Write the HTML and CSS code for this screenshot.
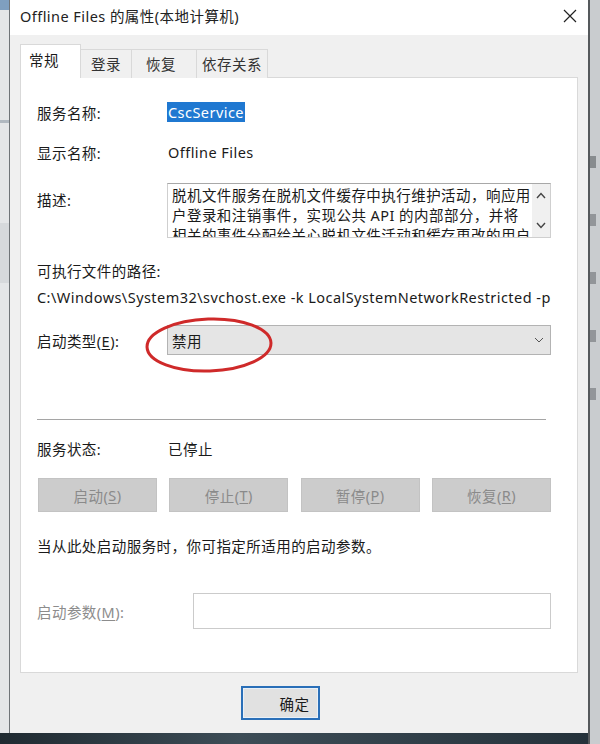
FILE: index.html
```html
<!DOCTYPE html>
<html lang="zh-CN">
<head>
<meta charset="utf-8">
<title>Offline Files 的属性(本地计算机)</title>
<link rel="stylesheet" href="styles.css">
</head>
<body>
<div class="screen">
  <div class="side side-left">
    <span class="frag f1"></span>
    <span class="frag f2"></span>
    <span class="frag f3"></span>
  </div>
  <div class="dialog">
    <div class="titlebar">
      <span class="title">Offline Files 的属性(本地计算机)</span>
      <svg class="close" width="14" height="14" viewBox="0 0 14 14"><path d="M1 1 L13 13 M13 1 L1 13" stroke="#222" stroke-width="1.2" fill="none"/></svg>
    </div>
    <div class="dbody">
      <div class="tabs">
        <div class="tab active">常规</div>
        <div class="tab tab-login">登录</div>
        <div class="tab tab-restore">恢复</div>
        <div class="tab tab-dep">依存关系</div>
      </div>
      <div class="panel">
        <div class="row r-name">
          <span class="label">服务名称:</span>
          <span class="selected">CscService</span>
        </div>
        <div class="row r-display">
          <span class="label">显示名称:</span>
          <span class="value">Offline Files</span>
        </div>
        <div class="row r-desc">
          <span class="label desc-label">描述:</span>
          <div class="descbox">
            <div class="desctext">脱机文件服务在脱机文件缓存中执行维护活动，响应用<br>户登录和注销事件，实现公共 API 的内部部分，并将<br>相关的事件分配给关心脱机文件活动和缓存更改的用户</div>
            <div class="scroll">
              <svg width="10" height="7" viewBox="0 0 10 7"><path d="M1 6 L5 1.5 L9 6" stroke="#444" stroke-width="1.4" fill="none"/></svg>
              <svg width="10" height="7" viewBox="0 0 10 7"><path d="M1 1 L5 5.5 L9 1" stroke="#444" stroke-width="1.4" fill="none"/></svg>
            </div>
          </div>
        </div>
        <div class="row r-pathlabel"><span>可执行文件的路径:</span></div>
        <div class="row r-path"><span>C:\Windows\System32\svchost.exe -k LocalSystemNetworkRestricted -p</span></div>
        <div class="row r-type">
          <span class="label">启动类型(<u>E</u>):</span>
          <div class="combo">
            <span>禁用</span>
            <svg width="10" height="6" viewBox="0 0 10 6"><path d="M1 1 L5 5 L9 1" stroke="#555" stroke-width="1" fill="none"/></svg>
          </div>
          <svg class="circle" width="132" height="60" viewBox="0 0 132 60"><ellipse cx="66" cy="30" rx="62" ry="26" transform="rotate(-2 66 30)" stroke="#cf2a2a" stroke-width="3" fill="none"/></svg>
        </div>
        <hr class="sep">
        <div class="row r-status">
          <span class="label">服务状态:</span>
          <span class="value">已停止</span>
        </div>
        <div class="buttons">
          <div class="btn">启动(<u>S</u>)</div>
          <div class="btn">停止(<u>T</u>)</div>
          <div class="btn">暂停(<u>P</u>)</div>
          <div class="btn">恢复(<u>R</u>)</div>
        </div>
        <div class="row r-hint"><span>当从此处启动服务时，你可指定所适用的启动参数。</span></div>
        <div class="row r-param">
          <span class="label label-dis param-label">启动参数(<u>M</u>):</span>
          <div class="input"></div>
        </div>
      </div>
      <div class="footer">
        <div class="ok">确定</div>
      </div>
    </div>
  </div>
  <div class="side side-right">
    <span class="mark m1"></span>
    <span class="mark"></span>
    <span class="mark"></span>
    <span class="mark"></span>
    <span class="mark"></span>
  </div>
</div>
</body>
</html>
```
FILE: styles.css
```css
html, body {
  margin: 0;
  padding: 0;
}
body {
  font-family: "Noto Sans", "Noto Sans CJK SC", sans-serif;
  color: #1a1a1a;
  font-size: 14.5px;
  letter-spacing: 0.45px;
}
.screen {
  width: 600px;
  height: 744px;
  display: flex;
  overflow: hidden;
  background: linear-gradient(90deg, #1f2a31, #3d4d57 40%, #24313a);
}
.side {
  height: 733px;
}
.side-left {
  width: 9px;
  background: #e4e6e8;
  border-right: 1px solid #6f7478;
  display: flex;
  flex-direction: column;
}
.frag { display: block; }
.f1 { height: 10px; background: #7f9fbf; }
.f2 { height: 3px; background: #b0b8c0; margin-top: 110px; }
.f3 { height: 60px; background: #d6d9dc; margin-top: 100px; }
.side-right {
  flex: 1;
  background: #c9cccf;
  border-left: 2px solid #55595c;
  display: flex;
  flex-direction: column;
  gap: 46px;
  padding-top: 156px;
  overflow: hidden;
}
.mark {
  display: block;
  width: 6px;
  height: 12px;
  background: #7a7e82;
  opacity: 0.7;
}
.m1 { background: #6c7074; }
.dialog {
  width: 578px;
  height: 733px;
  background: #f0f0f0;
  display: flex;
  flex-direction: column;
}
.titlebar {
  height: 35px;
  background: #fff;
  display: flex;
  align-items: center;
  justify-content: space-between;
  padding: 0 10px 0 10px;
  flex-shrink: 0;
}
.title {
  color: #222;
  position: relative;
  top: -2px;
}
.close { margin-right: 1px; position: relative; top: -2px; }
.dbody {
  padding: 9px 10px 0 10px;
  display: flex;
  flex-direction: column;
  flex: 1;
}
.tabs {
  display: flex;
  align-items: flex-end;
  height: 34px;
  margin-bottom: -1px;
  position: relative;
  z-index: 1;
}
.tab {
  height: 29px;
  line-height: 28px;
  padding: 0 10px;
  border: 1px solid #d9d9d9;
  border-bottom: none;
  margin-left: -1px;
  background: #f0f0f0;
  color: #333;
  box-sizing: border-box;
  text-align: center;
}
.tab.active {
  height: 34px;
  line-height: 30px;
  background: #fff;
  margin-left: 0;
  padding: 0 0 0 8px;
  width: 61px;
  text-align: left;
  color: #1a1a1a;
}
.tab-login { width: 52px; padding: 0; }
.tab-restore { width: 66px; padding: 0 6px 0 0; }
.tab-dep { width: 72px; padding: 0; }
.panel {
  background: #fff;
  border: 1px solid #d9d9d9;
  height: 596px;
  box-sizing: border-box;
  padding: 24px 26px 0 16px;
  display: flex;
  flex-direction: column;
}
.row {
  display: flex;
  align-items: center;
  height: 20px;
}
.label {
  width: 130px;
  flex-shrink: 0;
}
.selected {
  background: #1f78d1;
  color: #fff;
  padding: 0 1px;
  line-height: 20px;
}
.value { padding-left: 1px; }
.r-display { margin-top: 20px; }
.r-desc {
  margin-top: 21px;
  height: 55px;
  align-items: flex-start;
}
.desc-label { margin-top: 6px; }
.descbox {
  flex: 1;
  height: 55px;
  border: 1px solid #cfcfcf;
  border-top-color: #a8a8a8;
  box-sizing: border-box;
  display: flex;
  overflow: hidden;
  background: #fff;
}
.desctext {
  flex: 1;
  padding: 1px 0 0 4px;
  line-height: 20px;
  white-space: nowrap;
  overflow: hidden;
}
.scroll {
  width: 18px;
  flex-shrink: 0;
  background: #f0f0f0;
  display: flex;
  flex-direction: column;
  align-items: center;
  justify-content: space-between;
  padding: 8px 0 8px;
}
.r-pathlabel { margin-top: 22px; }
.r-path { margin-top: 7px; white-space: nowrap; }
.r-type {
  margin-top: 18px;
  height: 30px;
  position: relative;
}
.combo {
  flex: 1;
  height: 30px;
  background: #e5e5e5;
  border: 1px solid #b3b3b3;
  box-sizing: border-box;
  display: flex;
  align-items: center;
  justify-content: space-between;
  padding: 0 6px 0 4px;
}
.circle {
  position: absolute;
  left: 106px;
  top: -10px;
}
.sep {
  margin: 64px 5px 0 0;
  border: none;
  border-top: 1px solid #a5a5a5;
  height: 0;
}
.r-status { margin-top: 18px; }
.buttons {
  margin-top: 20px;
  display: flex;
  justify-content: space-between;
  padding-left: 1px;
}
.btn {
  width: 119px;
  height: 34px;
  background: #cccccc;
  border: 1px solid #c3c3c3;
  box-sizing: border-box;
  color: #8a8a8a;
  display: flex;
  align-items: center;
  justify-content: center;
}
.r-hint { margin-top: 23px; }
.r-param {
  margin-top: 38px;
  height: 36px;
}
.label-dis { color: #8c8c8c; }
.param-label { width: 156px; }
.input {
  flex: 1;
  height: 36px;
  border: 1px solid #cbcbcb;
  box-sizing: border-box;
  background: #fff;
}
.footer {
  padding: 13px 0 0 221px;
}
.ok {
  width: 79px;
  height: 34px;
  box-sizing: border-box;
  border: 2px solid #2a6fb8;
  background: #e1e1e1;
  box-shadow: inset 0 0 0 1px #e8f0f8;
  display: flex;
  align-items: center;
  justify-content: center;
  padding-left: 28px;
  color: #1a1a1a;
}
u { text-decoration-thickness: 1px; text-underline-offset: 2px; }
```
